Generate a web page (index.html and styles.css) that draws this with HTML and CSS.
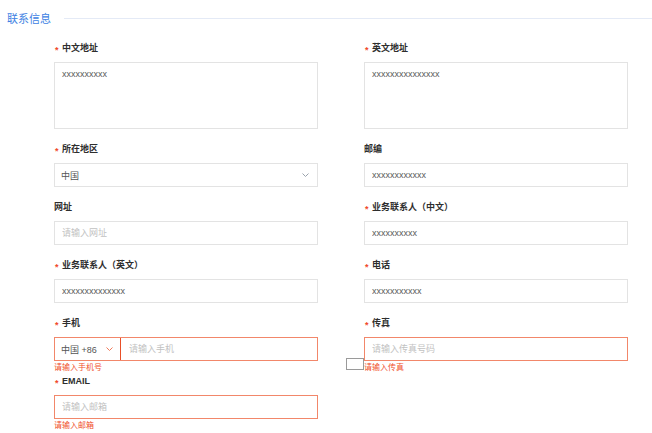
FILE: index.html
```html
<!DOCTYPE html>
<html lang="zh-CN">
<head>
<meta charset="utf-8">
<title>联系信息</title>
<link rel="stylesheet" href="styles.css">
</head>
<body>
<div class="section-title">
  <span class="title-text">联系信息</span>
  <span class="title-line"></span>
</div>
<form class="form">
  <div class="item">
    <label class="label"><span class="req">*</span>中文地址</label>
    <textarea class="control area">xxxxxxxxxx</textarea>
  </div>
  <div class="item">
    <label class="label"><span class="req">*</span>英文地址</label>
    <textarea class="control area">xxxxxxxxxxxxxxx</textarea>
  </div>

  <div class="item">
    <label class="label"><span class="req">*</span>所在地区</label>
    <div class="control select">
      <span class="select-value">中国</span>
      <svg class="chev" width="7" height="4" viewBox="0 0 7 4"><polyline points="0.5,0.5 3.5,3.5 6.5,0.5" fill="none" stroke="#9aa3ad" stroke-width="1"/></svg>
    </div>
  </div>
  <div class="item">
    <label class="label">邮编</label>
    <input class="control input" value="xxxxxxxxxxxx">
  </div>

  <div class="item">
    <label class="label">网址</label>
    <input class="control input" placeholder="请输入网址">
  </div>
  <div class="item">
    <label class="label"><span class="req">*</span>业务联系人（中文）</label>
    <input class="control input" value="xxxxxxxxxx">
  </div>

  <div class="item">
    <label class="label"><span class="req">*</span>业务联系人（英文）</label>
    <input class="control input" value="xxxxxxxxxxxxxx">
  </div>
  <div class="item">
    <label class="label"><span class="req">*</span>电话</label>
    <input class="control input" value="xxxxxxxxxxx">
  </div>

  <div class="item has-error">
    <label class="label"><span class="req">*</span>手机</label>
    <div class="phone">
      <div class="phone-code">
        <span>中国 +86</span>
        <svg class="chev" width="7" height="4" viewBox="0 0 7 4"><polyline points="0.5,0.5 3.5,3.5 6.5,0.5" fill="none" stroke="#f07a5a" stroke-width="1"/></svg>
      </div>
      <input class="phone-input" placeholder="请输入手机">
    </div>
    <div class="explain">请输入手机号</div>
  </div>
  <div class="item has-error">
    <label class="label"><span class="req">*</span>传真</label>
    <input class="control input error" placeholder="请输入传真号码">
    <div class="explain">请输入传真</div>
  </div>

  <div class="item has-error">
    <label class="label"><span class="req">*</span>EMAIL</label>
    <input class="control input error" placeholder="请输入邮箱">
    <div class="explain">请输入邮箱</div>
  </div>
</form>
<div class="ghost-box"></div>
</body>
</html>
```
FILE: styles.css
```css
* { box-sizing: border-box; }
html, body {
  margin: 0;
  padding: 0;
  background: #fff;
  font-family: "Liberation Sans", "Noto Sans CJK SC", sans-serif;
  color: #333;
}
.section-title {
  display: flex;
  align-items: center;
  height: 37px;
  padding-left: 7px;
}
.title-text {
  font-size: 11px;
  line-height: 14px;
  color: #3d7fe3;
}
.title-line {
  flex: 1;
  height: 1px;
  margin-left: 13px;
  background: #e4eaf6;
}
.form {
  display: grid;
  grid-template-columns: 264px 264px;
  column-gap: 46px;
  padding: 4px 0 0 54px;
}
.item {
  display: flex;
  flex-direction: column;
  padding-bottom: 13px;
}
.item.has-error { padding-bottom: 0; }
.label {
  display: block;
  height: 14px;
  line-height: 14px;
  margin-bottom: 7px;
  font-size: 9px;
  font-weight: bold;
  color: #2e2e2e;
}
.req {
  display: inline-block;
  width: 8px;
  padding-left: 1px;
  position: relative;
  top: 2px;
  color: #f04a2a;
  font-size: 9px;
  font-weight: bold;
}
.control {
  width: 264px;
  border: 1px solid #e3e3e3;
  background: #fff;
  font-family: "Liberation Sans", "Noto Sans CJK SC", sans-serif;
  font-size: 9px;
  color: #5a5a5a;
  border-radius: 0;
  outline: none;
  margin: 0;
}
.area {
  height: 67px;
  padding: 5px 7px;
  line-height: 13px;
  resize: none;
  overflow: hidden;
}
.input {
  height: 24px;
  padding: 0 7px;
  line-height: 22px;
}
.input::placeholder, .phone-input::placeholder { color: #c2c2c2; }
.input.error { border-color: #f2876a; }
.select {
  height: 24px;
  display: flex;
  align-items: center;
  justify-content: space-between;
  padding: 0 8px 0 6px;
  color: #555;
}
.chev { display: block; }
.phone {
  display: flex;
  width: 264px;
  height: 24px;
  border: 1px solid #f2876a;
}
.phone-code {
  width: 66px;
  display: flex;
  align-items: center;
  justify-content: space-between;
  padding: 0 7px 0 6px;
  border-right: 1px solid #e84f28;
  font-size: 9px;
  color: #555;
}
.phone-input {
  flex: 1;
  min-width: 0;
  border: 0;
  outline: none;
  padding: 0 8px;
  font-family: "Liberation Sans", "Noto Sans CJK SC", sans-serif;
  font-size: 9px;
  background: #fff;
}
.explain {
  height: 13px;
  line-height: 13px;
  font-size: 8px;
  color: #f0502a;
}
.ghost-box {
  position: absolute;
  left: 346px;
  top: 358px;
  width: 18px;
  height: 12px;
  border: 1px solid #9a9a9a;
  background: #fff;
}
```
